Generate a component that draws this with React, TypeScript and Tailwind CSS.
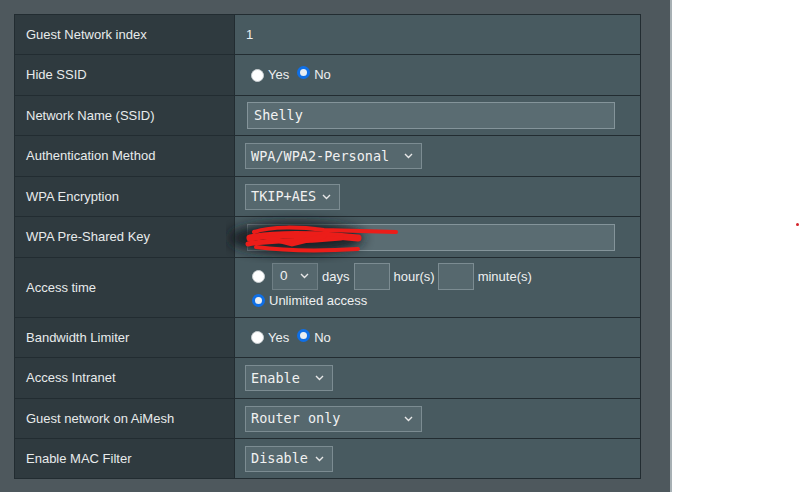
import { ReactNode } from 'react'

const sans = { fontFamily: '"Liberation Sans", Arial, sans-serif' }
const mono = { fontFamily: '"DejaVu Sans Mono", "Liberation Mono", monospace' }

function Radio({ checked }: { checked?: boolean }) {
  return checked ? (
    <span className="inline-block w-[13px] h-[13px] rounded-full border-[3px] border-[#0f6fe6] bg-[#e9eef2] shrink-0" />
  ) : (
    <span className="inline-block w-[13px] h-[13px] rounded-full border border-[#c9cfd2] bg-white shrink-0" />
  )
}

function Chevron() {
  return (
    <svg width="9" height="6" viewBox="0 0 9 6" className="shrink-0">
      <path d="M1 1l3.5 3.5L8 1" stroke="#e8e8e8" strokeWidth="1.4" fill="none" />
    </svg>
  )
}

function Select({ value, width }: { value: string; width: string }) {
  return (
    <div
      className={`${width} h-[26px] flex items-center justify-between pl-[5px] pr-[8px] bg-[#56686e] border border-[#7c8c92] text-[13.5px] text-[#f1f1f1]`}
      style={mono}
    >
      <span>{value}</span>
      <Chevron />
    </div>
  )
}

function Row({ label, h, children }: { label: string; h: string; children: ReactNode }) {
  return (
    <div className={`flex ${h} border-b border-[#222c31]`}>
      <div className="w-[220px] shrink-0 bg-[#2f3a3f] border-r border-[#222c31] flex items-center pl-[11px] text-[13px] text-[#e8ebec]">
        {label}
      </div>
      <div className="flex-1 bg-[#485a60] flex items-center pl-[10px] text-[13px] text-[#eef0f1]">{children}</div>
    </div>
  )
}

function YesNo() {
  return (
    <div className="flex items-center pl-[6px]">
      <Radio />
      <span className="ml-[4px]">Yes</span>
      <span className="ml-[8px]"><Radio checked /></span>
      <span className="ml-[4px]">No</span>
    </div>
  )
}

export default function App() {
  return (
    <div className="w-[800px] h-[492px] bg-white flex" style={sans}>
      <div className="w-[672px] h-full bg-[#4e585d] border-r-2 border-[#a7b0b4] pt-[14px] pl-[14px]">
        <div className="w-[627px] border-t border-l border-r border-[#222c31]">
          <Row label="Guest Network index" h="h-[40px]">
            <span className="pl-[1px]">1</span>
          </Row>
          <Row label="Hide SSID" h="h-[41px]">
            <YesNo />
          </Row>
          <Row label="Network Name (SSID)" h="h-[40px]">
            <div
              className="ml-[2px] w-[368px] h-[27px] bg-[#5a6c72] border border-[#84949a] flex items-center pl-[6px] text-[13.5px] text-[#f3f3f3]"
              style={mono}
            >
              Shelly
            </div>
          </Row>
          <Row label="Authentication Method" h="h-[41px]">
            <Select value="WPA/WPA2-Personal" width="w-[177px]" />
          </Row>
          <Row label="WPA Encryption" h="h-[40px]">
            <Select value="TKIP+AES" width="w-[95px]" />
          </Row>
          <Row label="WPA Pre-Shared Key" h="h-[41px]">
            <div className="relative ml-[2px] w-[368px] h-[27px] bg-[#5a6c72] border border-[#84949a]">
              <svg className="absolute left-[-22px] top-[-14px]" width="200" height="52" viewBox="0 0 200 52">
                <defs>
                  <filter id="blur" x="-20%" y="-60%" width="140%" height="220%">
                    <feGaussianBlur stdDeviation="6" />
                  </filter>
                </defs>
                <ellipse cx="70" cy="27" rx="68" ry="16" fill="#161d20" opacity="0.95" filter="url(#blur)" />
                <path d="M28 21 C45 15 75 16 98 19 L170 21" stroke="#ec1d19" strokeWidth="4" fill="none" strokeLinecap="round" />
                <path d="M24 27 C50 22 80 23 110 25 L132 27" stroke="#ec1d19" strokeWidth="7" fill="none" strokeLinecap="round" />
                <path d="M22 33 C44 29 66 30 90 29 L115 27" stroke="#ec1d19" strokeWidth="5" fill="none" strokeLinecap="round" />
                <path d="M30 36 C60 40 100 40 132 38" stroke="#ec1d19" strokeWidth="4" fill="none" strokeLinecap="round" />
                <path d="M36 25 L66 33 L98 25" stroke="#ec1d19" strokeWidth="5" fill="none" strokeLinecap="round" />
              </svg>
            </div>
          </Row>
          <Row label="Access time" h="h-[60px]">
            <div className="flex flex-col gap-[1px] pl-[7px] pb-[2px]">
              <div className="flex items-center">
                <Radio />
                <div className="ml-[7px]">
                  <div
                    className="w-[46px] h-[27px] flex items-center justify-between pl-[7px] pr-[8px] bg-[#56686e] border border-[#6f7f85] text-[13.5px] text-[#f1f1f1]"
                    style={sans}
                  >
                    <span>0</span>
                    <Chevron />
                  </div>
                </div>
                <span className="ml-[4px]">days</span>
                <div className="ml-[5px] w-[36px] h-[27px] bg-[#56686e] border border-[#7c8c92]" />
                <span className="ml-[3px]">hour(s)</span>
                <div className="ml-[3px] w-[36px] h-[27px] bg-[#56686e] border border-[#7c8c92]" />
                <span className="ml-[4px]">minute(s)</span>
              </div>
              <div className="flex items-center">
                <Radio checked />
                <span className="ml-[4px]">Unlimited access</span>
              </div>
            </div>
          </Row>
          <Row label="Bandwidth Limiter" h="h-[40px]">
            <YesNo />
          </Row>
          <Row label="Access Intranet" h="h-[41px]">
            <Select value="Enable" width="w-[88px]" />
          </Row>
          <Row label="Guest network on AiMesh" h="h-[40px]">
            <Select value="Router only" width="w-[177px]" />
          </Row>
          <Row label="Enable MAC Filter" h="h-[40px]">
            <Select value="Disable" width="w-[88px]" />
          </Row>
        </div>
      </div>
      <div className="flex-1 relative">
        <span className="absolute left-[124px] top-[223px] w-[3px] h-[3px] rounded-full bg-[#d4232a]" />
      </div>
    </div>
  )
}
